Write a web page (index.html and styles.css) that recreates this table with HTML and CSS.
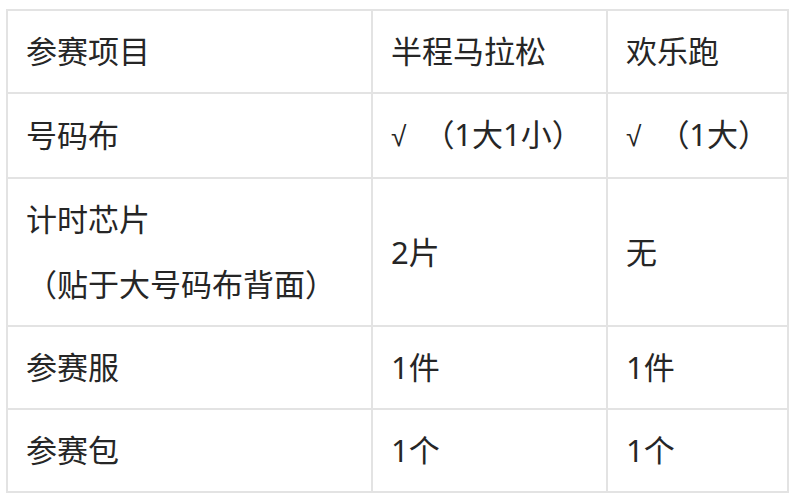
FILE: index.html
```html
<!DOCTYPE html>
<html lang="zh">
<head>
<meta charset="utf-8">
<link rel="stylesheet" href="styles.css">
</head>
<body>
<div class="wrap">
<table class="kit">
  <colgroup>
    <col class="c1"><col class="c2"><col class="c3">
  </colgroup>
  <tr><td>参赛项目</td><td>半程马拉松</td><td>欢乐跑</td></tr>
  <tr><td>号码布</td><td><span class="tick">√</span>（1大1小）</td><td><span class="tick">√</span>（1大）</td></tr>
  <tr><td>计时芯片<br>（贴于大号码布背面）</td><td>2片</td><td>无</td></tr>
  <tr><td>参赛服</td><td>1件</td><td>1件</td></tr>
  <tr><td>参赛包</td><td>1个</td><td>1个</td></tr>
</table>
</div>
</body>
</html>
```

FILE: styles.css
```css
html, body {
  margin: 0;
  background: #fff;
}
.wrap {
  padding: 9px 0 0 6px;
}
.kit {
  border-collapse: collapse;
  width: 781px;
  table-layout: fixed;
  font-family: "Noto Sans", "Noto Sans CJK SC", sans-serif;
  font-size: 31px;
  color: #262626;
}
.c1 { width: 365px; }
.c2 { width: 235px; }
.c3 { width: 181px; }
.kit td {
  border: 2px solid #e3e3e3;
  padding: 8px 18px;
  line-height: 65px;
  vertical-align: middle;
  white-space: nowrap;
}
.tick {
  font-family: "Liberation Sans", sans-serif;
  font-size: 28px;
  margin-right: 17px;
}
```
